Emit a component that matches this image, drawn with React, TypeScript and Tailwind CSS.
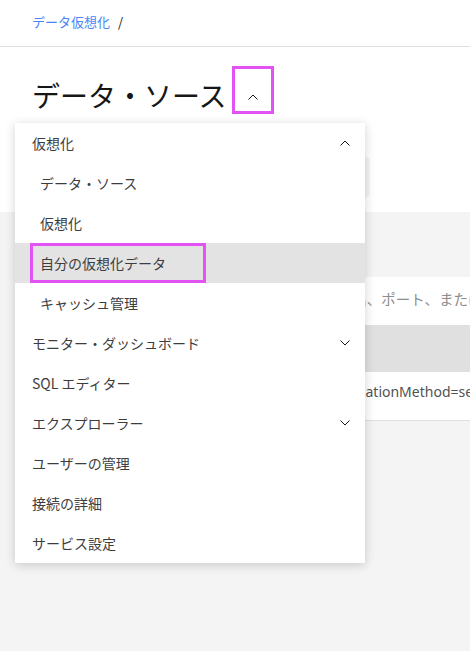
import React from "react";

const MAGENTA = "border-[#e352f2]";

function Chevron({ up, className = "" }: { up?: boolean; className?: string }) {
  return (
    <svg width="10" height="6" viewBox="0 0 10 6" className={className} fill="none">
      {up ? (
        <polyline points="0.5,5.5 5,1 9.5,5.5" stroke="#161616" strokeWidth="1" />
      ) : (
        <polyline points="0.5,0.5 5,5 9.5,0.5" stroke="#161616" strokeWidth="1" />
      )}
    </svg>
  );
}

type Item = { label: string; sub?: boolean; chevron?: "up" | "down"; active?: boolean };

const items: Item[] = [
  { label: "仮想化", chevron: "up" },
  { label: "データ・ソース", sub: true },
  { label: "仮想化", sub: true },
  { label: "自分の仮想化データ", sub: true, active: true },
  { label: "キャッシュ管理", sub: true },
  { label: "モニター・ダッシュボード", chevron: "down" },
  { label: "SQL エディター" },
  { label: "エクスプローラー", chevron: "down" },
  { label: "ユーザーの管理" },
  { label: "接続の詳細" },
  { label: "サービス設定" },
];

export default function App() {
  return (
    <div className="relative w-[470px] h-[651px] overflow-hidden bg-[#f4f4f4] font-['Noto_Sans_CJK_JP','Noto_Sans',sans-serif]">
      {/* Breadcrumb */}
      <header className="h-[47px] bg-white border-b border-[#e0e0e0] flex items-center px-8 gap-2 text-[13px] pb-[2px]">
        <span className="text-[#4a86f6]">データ仮想化</span>
        <span className="text-[#161616]">/</span>
      </header>

      {/* Title area */}
      <section className="bg-white h-[165px] pt-[19px]">
        <div className="flex items-start pl-8">
          <h1 className="text-[28px] leading-none text-[#161616] mt-[15px]">データ・ソース</h1>
          <div className={`ml-[5px] w-[42px] h-[48px] border-[3px] ${MAGENTA} flex items-center justify-center pt-[14px]`}>
            <Chevron up />
          </div>
        </div>
        <div className="ml-8 mt-[43px] w-[338px] h-[40px] rounded bg-[#f4f4f4]" />
      </section>

      {/* Gray content area */}
      <section className="pt-[65px] pl-8">
        <div className="bg-white h-[144px] border-b border-[#e0e0e0] whitespace-nowrap overflow-hidden">
          <div className="h-[48px] flex items-center text-[14.5px] text-[#8d8d8d] pl-[2px] pb-[4px]">
            接続先のデータ・ソースを識別するには、ホスト名、ポート、またはデータベース名を入力します
          </div>
          <div className="h-[47px] bg-[#e0e0e0]" />
          <div className="h-[38px] flex items-center text-[14px] text-[#525252] font-['Noto_Sans',sans-serif] pl-[69px]">
            jdbc:db2://host:50000/BIGSQL:authenticationMethod=server
          </div>
        </div>
      </section>

      {/* Dropdown menu */}
      <nav className="absolute left-[15px] top-[123px] w-[350px] bg-white shadow-[0_2px_10px_rgba(0,0,0,0.18)]">
        {items.map((it, i) => (
          <div
            key={i}
            className={`relative h-[40px] flex items-center justify-between pr-[15px] text-[14px] text-[#3d3d3d] ${
              it.sub ? "pl-[25px]" : "pl-[17px]"
            } ${it.active ? "bg-[#e3e3e3]" : ""}`}
          >
            {it.active && (
              <div className={`absolute left-[15px] top-0 w-[176px] h-[40px] border-[3px] ${MAGENTA}`} />
            )}
            <span className="relative">{it.label}</span>
            {it.chevron && <Chevron up={it.chevron === "up"} />}
          </div>
        ))}
      </nav>
    </div>
  );
}
